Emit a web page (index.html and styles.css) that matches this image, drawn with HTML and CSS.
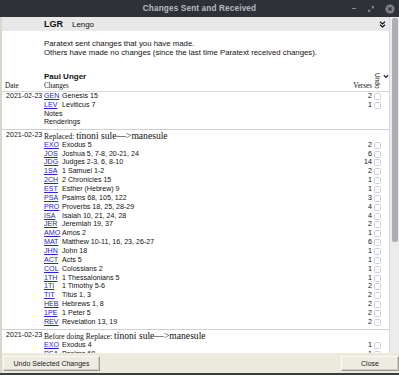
FILE: index.html
```html
<!DOCTYPE html>
<html>
<head>
<meta charset="utf-8">
<link rel="stylesheet" href="styles.css">
</head>
<body>
<div class="titlebar">
  <span class="title">Changes Sent and Received</span>
  <div class="wctl">
    <span class="wmin"></span>
    <svg class="wmax" width="6" height="6" viewBox="0 0 6 6"><path d="M3.5 0.5H5.5V2.5M5.5 0.5L3.6 2.4M2.5 5.5H0.5V3.5M0.5 5.5L2.4 3.6" stroke="#8a8c92" stroke-width="0.9" fill="none"/></svg>
    <svg class="wclose" width="10" height="10" viewBox="0 0 10 10"><circle cx="5" cy="5" r="4.6" fill="#7d7f85"/><path d="M3.3 3.3L6.7 6.7M6.7 3.3L3.3 6.7" stroke="#2e3037" stroke-width="1.2"/></svg>
  </div>
</div>
<div class="frame">
  <div class="main">
    <div class="content">
      <div class="band">
        <b class="proj">LGR</b><span class="pname">Lengo</span>
        <svg class="dchev" width="7" height="7" viewBox="0 0 7 7"><path d="M1 0.8L3.5 3L6 0.8M1 3.8L3.5 6L6 3.8" stroke="#111" stroke-width="1.3" fill="none"/></svg>
      </div>
      <div class="desc">
        <p>Paratext sent changes that you have made.</p>
        <p>Others have made no changes (since the last time Paratext received changes).</p>
      </div>
      <div class="head">
        <div class="user">Paul Unger</div>
        <div class="hdate">Date</div>
        <div class="hchanges">Changes</div>
        <div class="hverses">Verses</div>
        <div class="hundo">Undo</div>
        <svg class="hchev" width="6" height="5" viewBox="0 0 6 5"><path d="M0.8 1.2L3 3.4L5.2 1.2" stroke="#111" stroke-width="1.2" fill="none"/></svg>
      </div>

      <div class="group g1">
        <span class="date">2021-02-23</span><a class="code">GEN</a><span class="txt">Genesis 15</span><span class="num">2</span><span class="chk"></span>
        <span></span><a class="code">LEV</a><span class="txt">Leviticus 7</span><span class="num">1</span><span class="chk"></span>
        <span></span><span class="wide">Notes</span><span></span><span></span>
        <span></span><span class="wide">Renderings</span><span></span><span></span>
      </div>

      <div class="group">
        <span class="date hd">2021-02-23</span><span class="ghead"><span class="gsmall">Replaced:</span> <span class="gbig">tinoni sule—&gt;manesule</span></span>
        <span></span><a class="code">EXO</a><span class="txt">Exodus 5</span><span class="num">2</span><span class="chk"></span>
        <span></span><a class="code">JOS</a><span class="txt">Joshua 5, 7-8, 20-21, 24</span><span class="num">6</span><span class="chk"></span>
        <span></span><a class="code">JDG</a><span class="txt">Judges 2-3, 6, 8-10</span><span class="num">14</span><span class="chk"></span>
        <span></span><a class="code">1SA</a><span class="txt">1 Samuel 1-2</span><span class="num">2</span><span class="chk"></span>
        <span></span><a class="code">2CH</a><span class="txt">2 Chronicles 15</span><span class="num">1</span><span class="chk"></span>
        <span></span><a class="code">EST</a><span class="txt">Esther (Hebrew) 9</span><span class="num">1</span><span class="chk"></span>
        <span></span><a class="code">PSA</a><span class="txt">Psalms 68, 105, 122</span><span class="num">3</span><span class="chk"></span>
        <span></span><a class="code">PRO</a><span class="txt">Proverbs 18, 25, 28-29</span><span class="num">4</span><span class="chk"></span>
        <span></span><a class="code">ISA</a><span class="txt">Isaiah 10, 21, 24, 28</span><span class="num">4</span><span class="chk"></span>
        <span></span><a class="code">JER</a><span class="txt">Jeremiah 19, 37</span><span class="num">2</span><span class="chk"></span>
        <span></span><a class="code">AMO</a><span class="txt">Amos 2</span><span class="num">1</span><span class="chk"></span>
        <span></span><a class="code">MAT</a><span class="txt">Matthew 10-11, 16, 23, 26-27</span><span class="num">6</span><span class="chk"></span>
        <span></span><a class="code">JHN</a><span class="txt">John 18</span><span class="num">1</span><span class="chk"></span>
        <span></span><a class="code">ACT</a><span class="txt">Acts 5</span><span class="num">1</span><span class="chk"></span>
        <span></span><a class="code">COL</a><span class="txt">Colossians 2</span><span class="num">1</span><span class="chk"></span>
        <span></span><a class="code">1TH</a><span class="txt">1 Thessalonians 5</span><span class="num">1</span><span class="chk"></span>
        <span></span><a class="code">1TI</a><span class="txt">1 Timothy 5-6</span><span class="num">2</span><span class="chk"></span>
        <span></span><a class="code">TIT</a><span class="txt">Titus 1, 3</span><span class="num">2</span><span class="chk"></span>
        <span></span><a class="code">HEB</a><span class="txt">Hebrews 1, 8</span><span class="num">2</span><span class="chk"></span>
        <span></span><a class="code">1PE</a><span class="txt">1 Peter 5</span><span class="num">2</span><span class="chk"></span>
        <span></span><a class="code">REV</a><span class="txt">Revelation 13, 19</span><span class="num">2</span><span class="chk"></span>
      </div>

      <div class="group">
        <span class="date hd">2021-02-23</span><span class="ghead"><span class="gsmall">Before doing Replace:</span> <span class="gbig">tinoni sule—&gt;manesule</span></span>
        <span></span><a class="code">EXO</a><span class="txt">Exodus 4</span><span class="num">1</span><span class="chk"></span>
        <span></span><a class="code">PSA</a><span class="txt">Psalms 68</span><span class="num">1</span><span class="chk"></span>
      </div>
    </div>
    <div class="scrollbar"><div class="thumb"></div></div>
  </div>
  <div class="buttonbar">
    <button class="btn undo">Undo Selected Changes</button>
    <button class="btn close">Close</button>
  </div>
</div>
<div class="bottomstrip"></div>
</body>
</html>
```

FILE: styles.css
```css
* { box-sizing: border-box; }
html, body { margin: 0; padding: 0; }
body {
  width: 399px;
  height: 375px;
  overflow: hidden;
  background: #2c2e35;
  font-family: "Liberation Sans", Arial, sans-serif;
  color: #111;
}
p { margin: 0; }

.titlebar {
  height: 17px;
  background: #2f3138;
  display: flex;
  align-items: center;
  justify-content: center;
  position: relative;
}
.title {
  font-weight: bold;
  font-size: 8.2px;
  letter-spacing: 0.15px;
  color: #b9bac0;
}
.wctl {
  position: absolute;
  right: 4px;
  top: 0;
  height: 17px;
  display: flex;
  align-items: center;
  gap: 8px;
}
.wmin {
  width: 4px;
  height: 1px;
  background: #8a8c92;
  margin-right: 4px;
}
.wmax { margin-right: 3px; }

.frame {
  height: 356px;
  display: flex;
  flex-direction: column;
  background: #ffffff;
  border-left: 2px solid #d9d6cc;
}
.main {
  flex: 1;
  display: flex;
  min-height: 0;
}
.content {
  flex: 1;
  overflow: hidden;
  background: #fff;
}
.band {
  height: 14px;
  background: #e8e8e8;
  display: flex;
  align-items: center;
  padding-left: 42px;
  padding-right: 3px;
}
.proj { font-size: 9px; font-weight: bold; }
.pname { font-size: 7.9px; margin-left: 9px; }
.dchev { margin-left: auto; }

.desc {
  margin-top: 7.8px;
  padding-left: 42px;
  font-size: 7.8px;
  line-height: 9px;
}

.head {
  margin-top: 15px;
  display: grid;
  grid-template-columns: 40px 1fr auto 9px 8px;
  grid-template-rows: 10px 9px;
  padding-left: 2px;
  border-bottom: 1px solid #d8d8d8;
}
.user {
  grid-column: 2 / 3;
  grid-row: 1;
  font-size: 8px;
  font-weight: bold;
  line-height: 10px;
}
.hdate, .hchanges, .hverses {
  grid-row: 2;
  font-family: "Liberation Serif", "Times New Roman", serif;
  font-size: 7.2px;
  line-height: 9px;
}
.hdate { grid-column: 1; padding-left: 1px; }
.hchanges { grid-column: 2; }
.hverses { grid-column: 3; text-align: right; }
.hundo {
  grid-column: 4;
  grid-row: 1 / 3;
  writing-mode: vertical-rl;
  font-size: 6.5px;
  line-height: 6px;
  justify-self: center;
  align-self: end;
  margin-bottom: 2px;
  margin-left: 1px;
}
.hchev {
  grid-column: 5;
  grid-row: 1;
  align-self: center;
  justify-self: start;
  margin-left: 2px;
}

.group {
  display: grid;
  grid-template-columns: 40px 18px 1fr auto 9px;
  grid-auto-rows: 8.87px;
  padding: 0 8px 2px 2px;
  font-size: 7.1px;
  line-height: 8.87px;
  border-top: 1px solid #cfcfcf;
}
.g1 { border-top: 0; padding-bottom: 1.5px; }
.group + .group { margin-top: 0; }
.date { grid-column: 1; padding-left: 2px; white-space: nowrap; }
.date.hd { line-height: 11px; }
.code {
  color: #2424dc;
  text-decoration: underline;
  white-space: nowrap;
}
.txt { white-space: nowrap; }
.wide { grid-column: 2 / 4; }
.num { text-align: right; }
.chk {
  width: 7px;
  height: 7px;
  border: 1px solid #c7cfe0;
  border-radius: 1.5px;
  background: #fff;
  justify-self: end;
  align-self: center;
}
.ghead {
  grid-column: 2 / 6;
  font-family: "Liberation Serif", "Times New Roman", serif;
  line-height: 11px;
  height: 11px;
  white-space: nowrap;
}
.group > .ghead, .group > .date.hd { grid-row: span 1; }
.group:not(.g1) { grid-template-rows: 11px; }
.gsmall { font-size: 7.6px; }
.gbig { font-size: 9.6px; }

.scrollbar {
  width: 10px;
  background: #ececec;
  border-left: 1px solid #dcdcdc;
  padding: 1px 1px 0 2px;
}
.thumb {
  height: 224px;
  background: #adadb3;
  border-radius: 2px;
}

.buttonbar {
  height: 20px;
  background: #ece9dd;
  display: flex;
  align-items: center;
  justify-content: space-between;
  padding: 0 0 0 1px;
}
.btn {
  height: 15px;
  background: #eeebe2;
  border: 1px solid;
  border-color: #fbfaf6 #9e9b92 #9e9b92 #fbfaf6;
  box-shadow: inset -1px -1px 0 #cfccc2;
  font-family: "Liberation Sans", Arial, sans-serif;
  font-size: 7px;
  color: #222;
  padding: 0;
}
.undo { width: 97px; }
.close { width: 58px; }
.bottomstrip {
  height: 2px;
  background: #3a3c42;
}
```
